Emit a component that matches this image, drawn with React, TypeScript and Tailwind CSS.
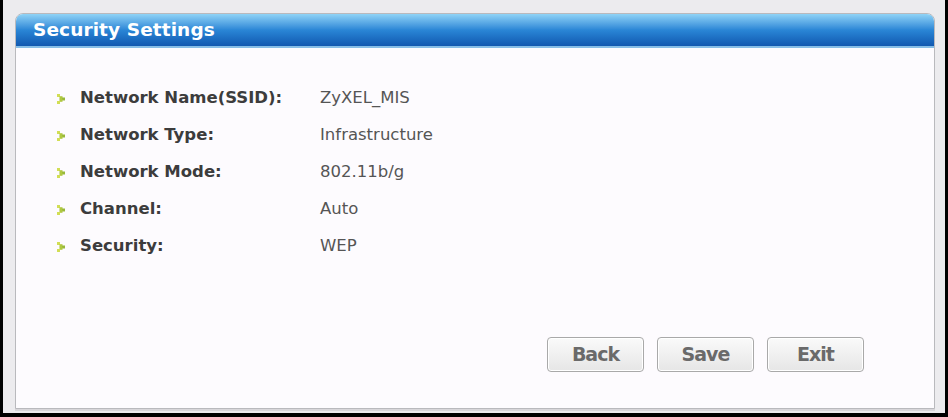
import React from "react";

const rows = [
  { label: "Network Name(SSID):", value: "ZyXEL_MIS" },
  { label: "Network Type:", value: "Infrastructure" },
  { label: "Network Mode:", value: "802.11b/g" },
  { label: "Channel:", value: "Auto" },
  { label: "Security:", value: "WEP" },
];

function Bullet() {
  // small yellow-green dotted arrow
  return (
    <svg width="8" height="10" viewBox="0 0 8 10" className="shrink-0">
      <rect x="0" y="0" width="3" height="3" fill="#d2de55" />
      <rect x="2.5" y="2.2" width="3" height="3" fill="#b0c840" />
      <rect x="5" y="3.5" width="3" height="3" fill="#98b83a" />
      <rect x="2.5" y="4.8" width="3" height="3" fill="#b0c840" />
      <rect x="0" y="7" width="3" height="3" fill="#d2de55" />
    </svg>
  );
}

function Btn({ children }: { children: React.ReactNode }) {
  return (
    <button className="w-[97px] h-[35px] rounded-[4px] border border-[#a9a9a9] bg-gradient-to-b from-[#fafafa] to-[#e6e6e6] shadow-[inset_0_0_0_1px_#ffffff] text-[19px] font-bold text-[#6a6a6a] tracking-[-1px]">
      {children}
    </button>
  );
}

export default function App() {
  return (
    <div
      className="w-[948px] h-[417px] bg-black pl-[3px] pr-[3px] pb-[4px]"
      style={{ fontFamily: '"DejaVu Sans", Verdana, sans-serif' }}
    >
      <div className="h-full bg-[#ecebee] pt-[13px] pl-[12px] pr-[10px] pb-[4px]">
        <div className="h-full flex flex-col rounded-t-[8px] border border-[#b9b9bd] bg-[#fdfbfe] shadow-[0_2px_0_#d8d6da]">
          <div className="h-[34px] rounded-t-[7px] bg-gradient-to-b from-[#8fd3f6] via-[#2a86d6] to-[#1258b0] border-b-2 border-[#86bde6] flex items-center pl-[17px]">
            <span className="text-white font-bold text-[18.5px] tracking-[0.1px]">Security Settings</span>
          </div>
          <div className="flex flex-col pt-[32px] pl-[41px]">
            {rows.map((r) => (
              <div key={r.label} className="h-[37px] flex items-center">
                <div className="w-[263px] flex items-center gap-[15px]">
                  <Bullet />
                  <span className="text-[16.5px] font-bold text-[#3c3c3c]">{r.label}</span>
                </div>
                <span className="text-[16.5px] text-[#555555]">{r.value}</span>
              </div>
            ))}
          </div>
          <div className="flex-1" />
          <div className="flex gap-[13px] pl-[531px] pb-[36px]">
            <Btn>Back</Btn>
            <Btn>Save</Btn>
            <Btn>Exit</Btn>
          </div>
        </div>
      </div>
    </div>
  );
}
